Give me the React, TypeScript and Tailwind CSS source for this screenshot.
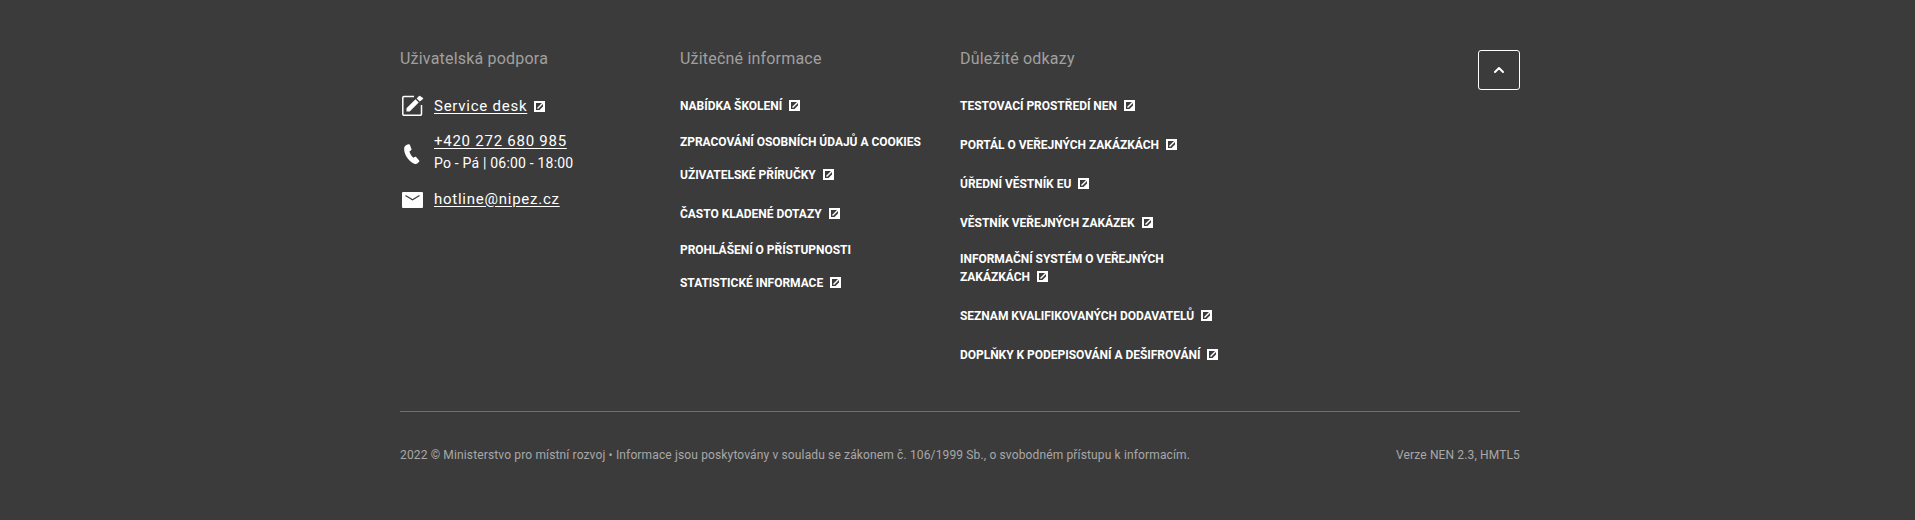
import { ChevronUp } from "lucide-react";

const USEFUL = [
  { label: "Nabídka školení", ext: true },
  { label: "Zpracování osobních údajů a cookies", ext: false },
  { label: "Uživatelské příručky", ext: true },
  { label: "Často kladené dotazy", ext: true },
  { label: "Prohlášení o přístupnosti", ext: false },
  { label: "Statistické informace", ext: true },
];

const IMPORTANT = [
  "Testovací prostředí NEN",
  "Portál o veřejných zakázkách",
  "Úřední věstník EU",
  "Věstník veřejných zakázek",
  "Informační systém o veřejných zakázkách",
  "Seznam kvalifikovaných dodavatelů",
  "Doplňky k podepisování a dešifrování",
];

function ExternalIcon() {
  return (
    <svg viewBox="0 0 11 11" aria-hidden className="ml-[7px] inline-block h-[11px] w-[11px] align-[-1px]">
      <rect width="11" height="11" fill="#fff" />
      <rect x="2" y="2" width="7" height="7" fill="#3b3b3b" />
      <path d="M3.500 7.500 9 2" stroke="#fff" strokeWidth="1.500" fill="none" />
      <path d="M9 5.500V9H5.500Z" fill="#fff" />
    </svg>
  );
}

function EditIcon() {
  return (
    <svg viewBox="0 0 22 22" aria-hidden className="ml-[2px] h-[22px] w-[22px] shrink-0 text-white">
      <path d="M12 1.500H2a1.200 1.200 0 0 0-1.200 1.200V19a1.200 1.200 0 0 0 1.200 1.200h16.300a1.200 1.200 0 0 0 1.200-1.200V10" fill="none" stroke="currentColor" strokeWidth="1.500" />
      <path d="M4.500 16.500v-3.200l9-9 3.200 3.200-9 9zM14.600 3.400 17 1a.8.8 0 0 1 1.100 0l2.900 2a.8.8 0 0 1 0 1.100l-3.200 2.500z" fill="currentColor" />
    </svg>
  );
}

function PhoneIcon() {
  return (
    <svg viewBox="4.500 2.400 15.500 19.200" aria-hidden className="mt-[4px] ml-[3px] h-[20px] w-[18px] shrink-0 text-white">
      <path d="M7.300 3.200 9 2.600c.6-.2 1 .1 1.200.6l1.500 4c.2.500 0 .9-.4 1.200L9.800 9.600c.5 2 1.800 4.300 3.700 5.900l1.700-.8c.5-.2.900-.1 1.200.3l2.700 3.200c.3.400.3.900-.1 1.300l-1.400 1.300c-1 .9-2.500 1.100-3.800.4C8.400 18.200 4.900 12.500 4.700 7.500c-.1-2 .9-3.700 2.600-4.300z" fill="currentColor" />
    </svg>
  );
}

function MailIcon() {
  return (
    <svg viewBox="0 0 21 16" aria-hidden className="mt-[2px] ml-[2px] h-[16px] w-[21px] shrink-0 text-white">
      <rect width="21" height="16" rx="1" fill="currentColor" />
      <path d="M3.500 3.500 10.500 7.800 17.500 3.500" fill="none" stroke="#3b3b3b" strokeWidth="1.200" />
    </svg>
  );
}

function LinkItem({ label, ext }: { label: string; ext: boolean }) {
  // two-line items have no extra space above them in the original
  const wraps = label.startsWith("Informační");
  return (
    <li className={`mb-3 text-[12px] leading-[18px] ${ext ? "pb-[6px]" : ""} ${ext && !wraps ? "pt-[3px]" : ""}`}>
      <a href="#" className="font-bold tracking-[-0.03px] text-white uppercase">
        {label}
        {ext && <ExternalIcon />}
      </a>
    </li>
  );
}

function Heading({ children }: { children: string }) {
  return <h3 className="mb-[25px] text-[16px] leading-[20px] tracking-[0.2px] text-[#a0a0a0]">{children}</h3>;
}

export default function App() {
  return (
    <footer className="h-[520px] bg-[#3b3b3b] font-['Roboto',sans-serif]">
      <div className="ml-[400px] w-[1120px] pt-[49px]">
        <div className="flex h-[363px] border-b border-[#6e6e6e]">
          <div className="w-[280px]">
            <Heading>Uživatelská podpora</Heading>
            <div className="flex h-[24px] items-center">
              <span className="flex w-[34px] items-center">
                <EditIcon />
              </span>
              <div>
                <a href="#" className="text-[15px] leading-[20px] tracking-[0.75px] text-white underline underline-offset-2">
                  Service desk
                </a>
                <ExternalIcon />
              </div>
            </div>
            <div className="mt-[13px] flex items-center">
              <span className="flex w-[34px] items-center">
                <PhoneIcon />
              </span>
              <div>
                <a href="#" className="block text-[15px] leading-[20px] tracking-[0.75px] text-white underline underline-offset-2">
                  +420 272 680 985
                </a>
                <p className="mt-[2px] text-[14px] leading-[20px] tracking-[0.2px] text-white">Po - Pá | 06:00 - 18:00</p>
              </div>
            </div>
            <div className="mt-[14px] flex h-[24px] items-center">
              <span className="flex w-[34px] items-center">
                <MailIcon />
              </span>
              <a href="#" className="text-[15px] leading-[20px] tracking-[0.75px] text-white underline underline-offset-2">
                hotline@nipez.cz
              </a>
            </div>
          </div>
          <div className="w-[280px]">
            <Heading>Užitečné informace</Heading>
            <ul>
              {USEFUL.map((l) => (
                <LinkItem key={l.label} label={l.label} ext={l.ext} />
              ))}
            </ul>
          </div>
          <div className="w-[280px]">
            <Heading>Důležité odkazy</Heading>
            <ul className="w-[265px]">
              {IMPORTANT.map((l) => (
                <LinkItem key={l} label={l} ext />
              ))}
            </ul>
          </div>
          <div className="flex flex-1 justify-end">
            <button className="mt-[1px] grid h-[40px] w-[42px] place-items-center rounded-[3px] border border-white text-white">
              <ChevronUp size={16} strokeWidth={3} />
            </button>
          </div>
        </div>
        <div className="mt-[34px] flex justify-between text-[12px] leading-[18px] tracking-[0.14px] text-[#a8a8a8]">
          <p>2022 © Ministerstvo pro místní rozvoj • Informace jsou poskytovány v souladu se zákonem č. 106/1999 Sb., o svobodném přístupu k informacím.</p>
          <p>Verze NEN 2.3, HMTL5</p>
        </div>
      </div>
    </footer>
  );
}
